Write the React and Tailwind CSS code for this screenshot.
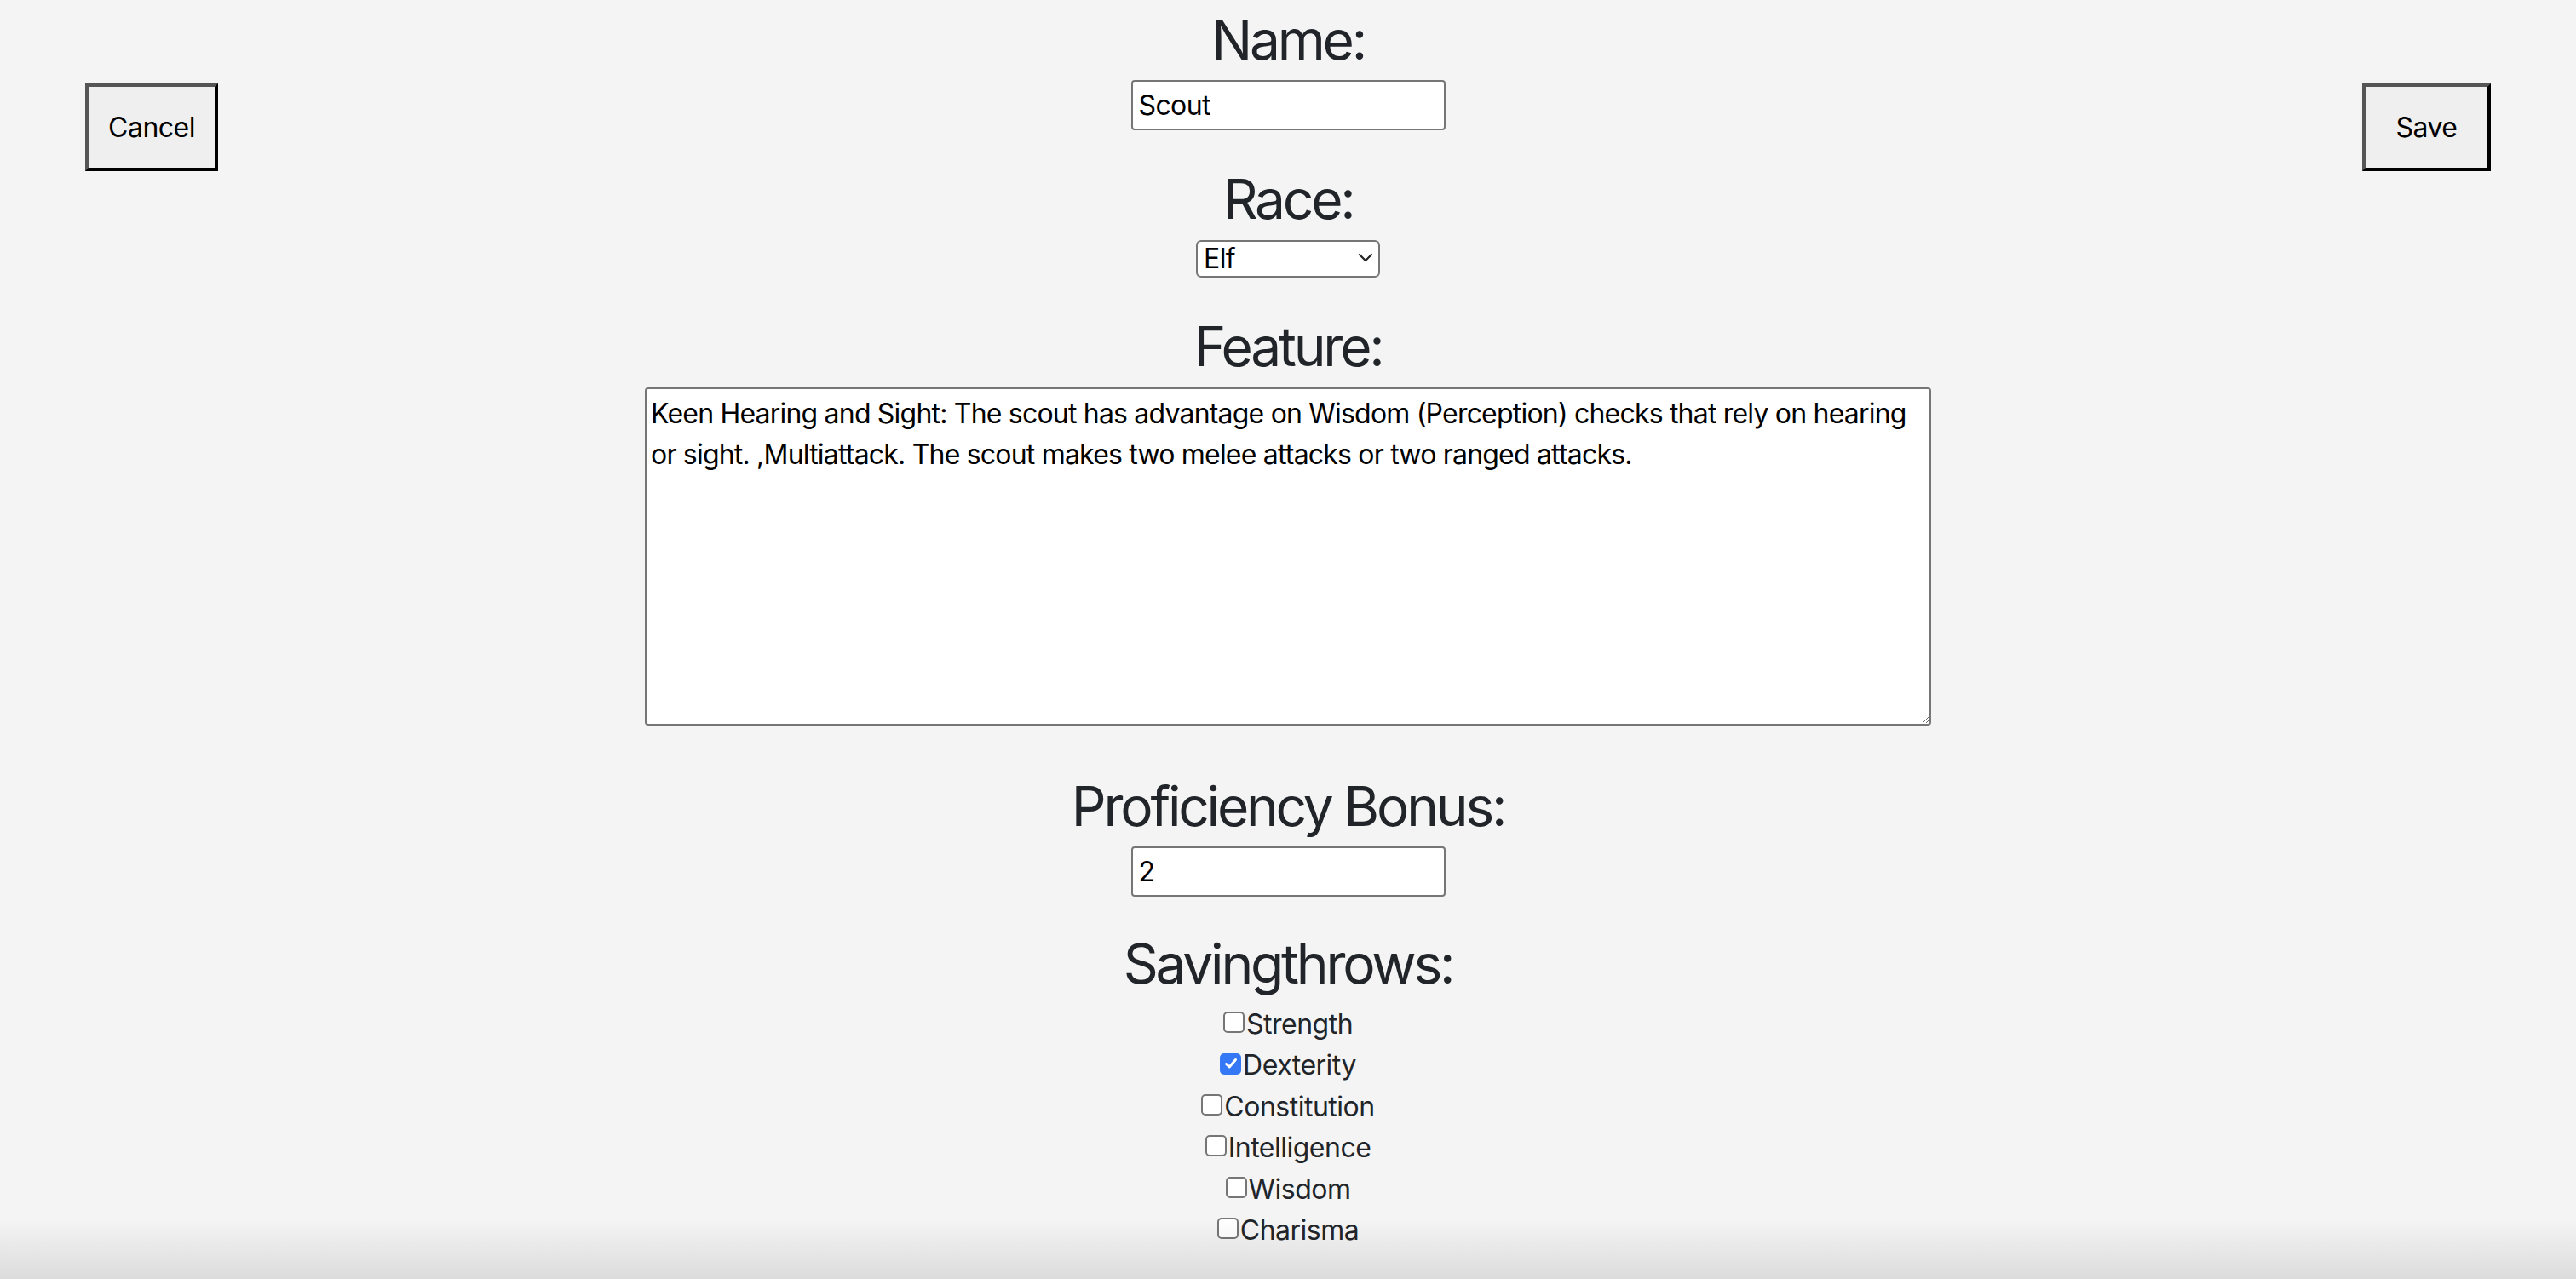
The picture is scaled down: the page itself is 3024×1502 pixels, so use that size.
import React from "react";

const font = { fontFamily: "Inter, 'Noto Sans', sans-serif" };

function Heading({ children, className = "" }) {
  return (
    <h2
      className={`text-[64px] leading-[77px] font-normal tracking-[-3.2px] text-[#212529] whitespace-nowrap ${className}`}
    >
      {children}
    </h2>
  );
}

function Check({ label, checked }) {
  return (
    <div className="flex items-center justify-center leading-[48.4px] text-[32px] tracking-[-0.5px] text-[#212529]">
      {checked ? (
        <span className="mr-[2px] mb-[5px] flex h-[25px] w-[25px] items-center justify-center rounded-[5px] bg-[#3478f6]">
          <svg width="18" height="18" viewBox="0 0 18 18" fill="none">
            <path d="M3.5 9.5 L7.2 13 L14.5 4.5" stroke="white" strokeWidth="3" strokeLinecap="round" strokeLinejoin="round" />
          </svg>
        </span>
      ) : (
        <span className="mr-[2px] mb-[5px] block h-[25px] w-[25px] rounded-[5px] border-2 border-[#767676] bg-white" />
      )}
      <span>{label}</span>
    </div>
  );
}

export default function App() {
  return (
    <div
      className="relative min-h-screen w-full overflow-hidden bg-[#f4f4f4]"
      style={font}
    >
      <div className="grid grid-cols-[1fr_auto_1fr]">
        <div className="flex items-start">
          <button className="ml-[100px] mt-[98px] h-[103px] w-[156px] border-4 border-t-[#555555] border-l-[#555555] border-b-black border-r-black bg-[#efefef] text-[32px] tracking-[-0.5px] text-black">
            Cancel
          </button>
        </div>

        <div className="flex flex-col items-center pb-[30px]">
          <Heading className="mt-[8px]">Name:</Heading>
          <input
            readOnly
            value="Scout"
            className="mt-[9px] h-[59px] w-[369px] rounded-[4px] border-2 border-[#767676] bg-white px-[7px] text-[32px] tracking-[-0.6px] text-black outline-none"
          />

          <Heading className="mt-[42px]">Race:</Heading>
          <div className="relative mt-[10px] h-[44px] w-[216px]">
            <select
              defaultValue="Elf"
              className="h-full w-full appearance-none rounded-[6px] border-2 border-[#767676] bg-white pl-[7px] text-[32px] leading-[40px] tracking-[-0.6px] text-black outline-none"
            >
              <option>Elf</option>
              <option>Human</option>
              <option>Dwarf</option>
            </select>
            <svg
              className="pointer-events-none absolute right-[8px] top-[15px]"
              width="18"
              height="12"
              viewBox="0 0 18 12"
              fill="none"
            >
              <path d="M2 2 L9 9 L16 2" stroke="#222" strokeWidth="2.2" strokeLinecap="round" strokeLinejoin="round" />
            </svg>
          </div>

          <Heading className="mt-[42px]">Feature:</Heading>
          <textarea
            readOnly
            className="mt-[10px] block h-[397px] w-[1510px] rounded-[4px] border-2 border-[#767676] bg-white px-[5px] pt-[5px] text-[32px] leading-[48px] tracking-[-0.8px] text-black outline-none"
            value="Keen Hearing and Sight: The scout has advantage on Wisdom (Perception) checks that rely on hearing or sight. ,Multiattack. The scout makes two melee attacks or two ranged attacks."
          />

          <Heading className="mt-[56px]">Proficiency Bonus:</Heading>
          <input
            readOnly
            value="2"
            className="mt-[9px] h-[59px] w-[369px] rounded-[4px] border-2 border-[#767676] bg-white px-[7px] text-[32px] text-black outline-none"
          />

          <Heading className="mt-[40px]">Savingthrows:</Heading>
          <div className="mt-[9px] flex flex-col items-center">
            <Check label="Strength" />
            <Check label="Dexterity" checked />
            <Check label="Constitution" />
            <Check label="Intelligence" />
            <Check label="Wisdom" />
            <Check label="Charisma" />
          </div>
        </div>

        <div className="flex items-start justify-end">
          <button className="mr-[100px] mt-[98px] h-[103px] w-[151px] border-4 border-t-[#555555] border-l-[#555555] border-b-black border-r-black bg-[#efefef] text-[32px] tracking-[-0.5px] text-black">
            Save
          </button>
        </div>
      </div>

      <div className="pointer-events-none absolute bottom-0 left-0 right-0 h-[70px] bg-gradient-to-b from-transparent to-black/10" />
    </div>
  );
}
